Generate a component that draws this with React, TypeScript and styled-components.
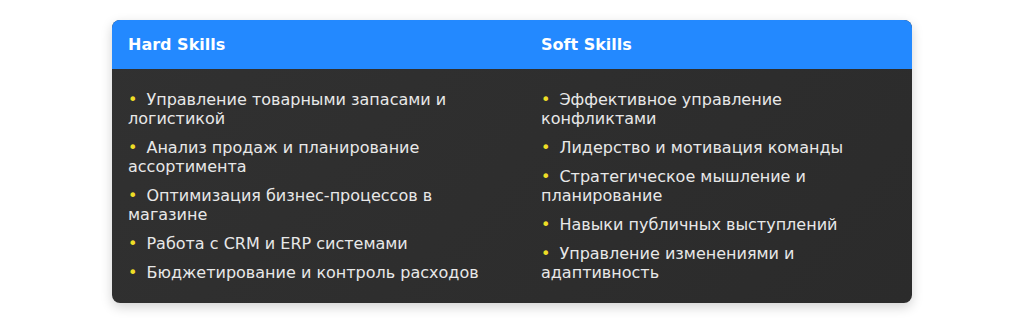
import React from 'react';
import styled, { createGlobalStyle } from 'styled-components';

const GlobalStyle = createGlobalStyle`
  body {
    margin: 0;
    background: #ffffff;
    font-family: "DejaVu Sans", sans-serif;
  }
`;

const Page = styled.div`
  padding: 20px 0;
`;

const Card = styled.div`
  width: 800px;
  margin: 0 auto;
  border-radius: 8px;
  overflow: hidden;
  background: linear-gradient(135deg, #313131 0%, #2b2b2b 100%);
  box-shadow: 0 4px 12px rgba(0, 0, 0, 0.18);
`;

const Row = styled.div`
  display: grid;
  grid-template-columns: 413px 1fr;
`;

const HeadRow = styled(Row)`
  background: #2389ff;
`;

const HeadCell = styled.div`
  padding: 15px 16px;
  color: #ffffff;
  font-size: 16px;
  font-weight: bold;
  line-height: 19px;
`;

const BodyCell = styled.div`
  padding: 16px 16px;
`;

const List = styled.ul`
  list-style: none;
  margin: 0;
  padding: 0;
`;

const Item = styled.li`
  padding: 5px 0;
  color: #e8e8e8;
  font-size: 16px;
  line-height: 19px;

  &::before {
    content: '•';
    color: #eede26;
    margin-right: 9px;
  }
`;

const hardSkills = [
  'Управление товарными запасами и логистикой',
  'Анализ продаж и планирование ассортимента',
  'Оптимизация бизнес-процессов в магазине',
  'Работа с CRM и ERP системами',
  'Бюджетирование и контроль расходов',
];

const softSkills = [
  'Эффективное управление конфликтами',
  'Лидерство и мотивация команды',
  'Стратегическое мышление и планирование',
  'Навыки публичных выступлений',
  'Управление изменениями и адаптивность',
];

export default function App() {
  return (
    <Page>
      <GlobalStyle />
      <Card>
        <HeadRow>
          <HeadCell>Hard Skills</HeadCell>
          <HeadCell>Soft Skills</HeadCell>
        </HeadRow>
        <Row>
          <BodyCell>
            <List>
              {hardSkills.map(s => (
                <Item key={s}>{s}</Item>
              ))}
            </List>
          </BodyCell>
          <BodyCell>
            <List>
              {softSkills.map(s => (
                <Item key={s}>{s}</Item>
              ))}
            </List>
          </BodyCell>
        </Row>
      </Card>
    </Page>
  );
}
